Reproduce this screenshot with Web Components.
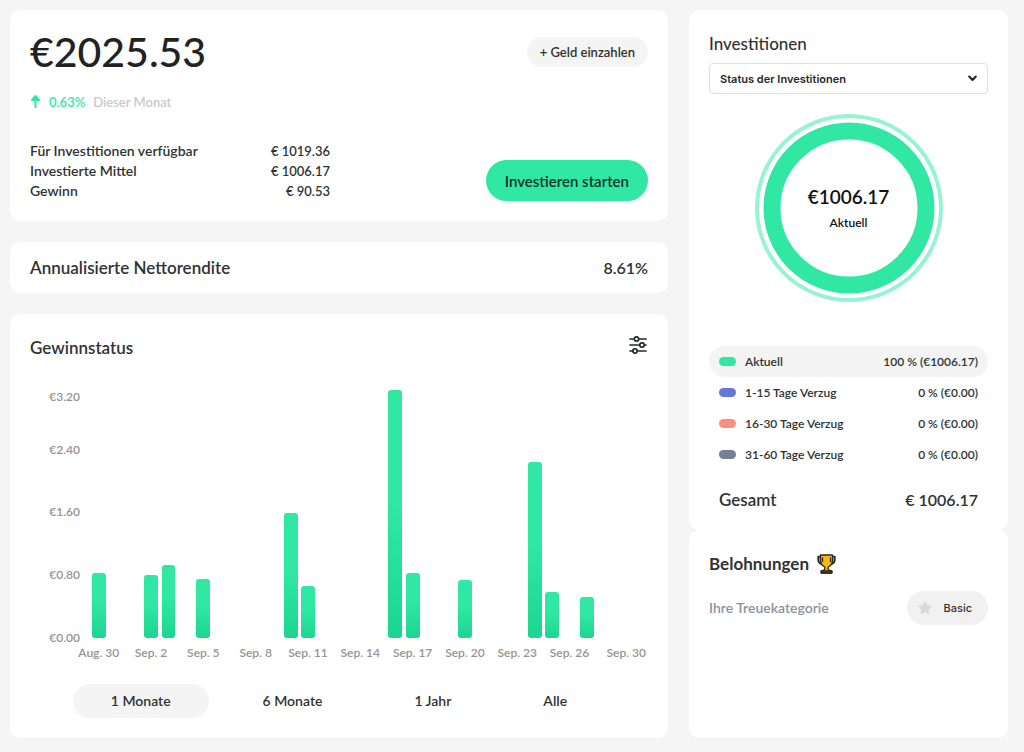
<!DOCTYPE html>
<html lang="de">
<head>
<meta charset="utf-8">
<meta name="viewport" content="width=device-width, initial-scale=1">
<title>Portfolio</title>
<style>
  body {
    margin: 0;
    background: #f5f5f5;
    color: #303332;
    font: 600 14px/20px Lato, "Liberation Sans", sans-serif;
    --green: #30e8a4;
    --soft: #f4f4f4;
  }
</style>
</head>
<body>
<portfolio-dashboard></portfolio-dashboard>

<script>
const define = (name, html, setup) => {
  const template = document.createElement('template');
  template.innerHTML = '<style>*{box-sizing:border-box}:host([hidden]){display:none}</style>' + html;
  customElements.define(name, class extends HTMLElement {
    connectedCallback() {
      if (this.shadowRoot) return;
      const root = this.attachShadow({ mode: 'open' });
      root.append(template.content.cloneNode(true));
      if (setup) setup(this, root);
    }
  });
};

define('ui-card', `
  <style>
    :host { display: block; box-sizing: border-box; background: #fff; border-radius: 10px; padding: 20px; min-width: 0; }
  </style>
  <slot></slot>`);

define('pill-button', `
  <style>
    :host { display: inline-block; }
    button { display: block; border: 0; border-radius: 24px; height: 30px; padding: 0 13px; background: var(--soft);
      color: inherit; font: inherit; font-size: 13px; white-space: nowrap; cursor: pointer; }
    :host([kind="primary"]) button { height: 41px; padding: 0 19px; background: var(--green); color: #14342a; font-size: 15px; }
    :host([kind="tab"]) button { height: 34px; padding: 0 38px; background: transparent; font-size: 14px; }
    :host([kind="tab"][active]) button { background: var(--soft); }
  </style>
  <button type="button"><slot></slot></button>`);

define('account-summary', `
  <style>
    :host { display: block; }
    .row { display: flex; justify-content: space-between; align-items: center; }
    .bottom { align-items: flex-end; margin-top: 29px; }
    h1 { margin: 0; font-size: 41px; line-height: 44px; font-weight: 500; color: #222; }
    .trend { display: flex; align-items: center; margin: 18px 0 0; font-size: 13px; line-height: 20px; color: #c9caca; }
    .trend svg { margin-right: 8px; }
    .trend strong { color: var(--green); font-weight: 600; margin-right: 8px; }
    table { width: 300px; border-collapse: collapse; }
    th, td { padding: 0; font-weight: 600; text-align: left; }
    td { text-align: right; font-size: 13px; }
  </style>
  <div class="row">
    <h1>€2025.53</h1>
    <pill-button>+ Geld einzahlen</pill-button>
  </div>
  <p class="trend">
    <svg width="11" height="16" viewBox="0 0 11 16" aria-hidden="true"><path d="M5.500 14V3M2 6l3.500-4L9 6z" fill="#30e8a4" stroke="#30e8a4" stroke-width="2" stroke-linejoin="round"/></svg>
    <strong>0.63%</strong><span>Dieser Monat</span>
  </p>
  <div class="row bottom">
    <table>
      <tr><th scope="row">Für Investitionen verfügbar</th><td>€ 1019.36</td></tr>
      <tr><th scope="row">Investierte Mittel</th><td>€ 1006.17</td></tr>
      <tr><th scope="row">Gewinn</th><td>€ 90.53</td></tr>
    </table>
    <pill-button kind="primary">Investieren starten</pill-button>
  </div>`);

define('net-return', `
  <style>
    :host { display: flex; justify-content: space-between; align-items: center; height: 51px; font-size: 17px; }
    h2 { margin: 0; font: inherit; }
    span { font-size: 16px; }
  </style>
  <h2>Annualisierte Nettorendite</h2><span>8.61%</span>`);

define('profit-chart', `
  <style>
    :host { display: grid; grid-template: 250px 23px / 50px minmax(0, 1fr); column-gap: 10px; font-size: 12px; line-height: 16px; color: #929594; }
    .axis { grid-row: 1 / 3; display: grid; grid-template-rows: 17px 53px 62px 63px 63px; align-content: start; align-items: end; justify-items: end; }
    .plot, .days { grid-column: 2; display: grid; grid-template-columns: repeat(32, minmax(0, 1fr)); }
    .plot { grid-row: 1; align-items: end; justify-items: center; }
    .days { grid-row: 2; align-items: end; }
    .bar { grid-row: 1; width: 80%; border-radius: 3px; background: linear-gradient(#30e8a4 45%, #1bd590); }
    .day { grid-row: 1; display: flex; justify-content: center; white-space: nowrap; }
    .day:last-child { justify-content: flex-end; padding-right: 2px; }
  </style>
  <div class="axis"><span>€3.20</span><span>€2.40</span><span>€1.60</span><span>€0.80</span><span>€0.00</span></div>
  <div class="plot"></div>
  <div class="days"></div>`, (host, root) => {
  const profits = { 0: .83, 3: .81, 4: .93, 6: .76, 11: 1.6, 12: .66, 17: 3.17, 18: .83, 21: .74, 25: 2.25, 26: .59, 28: .52 };
  const labels = { 0: 'Aug. 30', 3: 'Sep. 2', 6: 'Sep. 5', 9: 'Sep. 8', 12: 'Sep. 11', 15: 'Sep. 14', 18: 'Sep. 17', 21: 'Sep. 20', 24: 'Sep. 23', 27: 'Sep. 26', 31: 'Sep. 30' };
  const add = (parent, cls, day) => {
    const el = document.createElement('span');
    el.className = cls;
    el.style.gridColumn = Number(day) + 1;
    root.querySelector(parent).append(el);
    return el;
  };
  for (const [day, value] of Object.entries(profits)) add('.plot', 'bar', day).style.height = value / 3.2 * 100 + '%';
  for (const [day, text] of Object.entries(labels)) add('.days', 'day', day).textContent = text;
});

define('profit-status', `
  <style>
    :host { display: block; }
    header { display: flex; justify-content: space-between; align-items: flex-start; height: 28px; margin-bottom: 26px; }
    h2 { margin: 0; font-size: 17px; line-height: 28px; font-weight: 600; }
    header button { display: block; padding: 0; border: 0; background: none; height: 24px; cursor: pointer; }
    nav { display: flex; justify-content: center; gap: 16px; margin-top: 23px; }
  </style>
  <header>
    <h2>Gewinnstatus</h2>
    <button type="button" aria-label="Filter">
      <svg width="20" height="18" viewBox="0 0 20 18" fill="none" stroke="#222b2d" stroke-width="1.700" stroke-linecap="round">
        <path d="M2 3h4M11 3h7M2 9h9M17 9h1M2 15h3M10 15h8"/>
        <circle cx="8.500" cy="3" r="2.200"/><circle cx="14" cy="9" r="2.200"/><circle cx="7" cy="15" r="2.200"/>
      </svg>
    </button>
  </header>
  <profit-chart></profit-chart>
  <nav>
    <pill-button kind="tab" active>1 Monate</pill-button>
    <pill-button kind="tab">6 Monate</pill-button>
    <pill-button kind="tab">1 Jahr</pill-button>
    <pill-button kind="tab">Alle</pill-button>
  </nav>`);

define('status-donut', `
  <style>
    :host { display: grid; justify-items: center; align-items: center; color: #111; }
    svg, .label { grid-area: 1 / 1; }
    .label { display: grid; justify-items: center; gap: 2px; font-size: 12px; line-height: 20px; }
    strong { font-size: 19px; line-height: 28px; font-weight: 600; }
  </style>
  <svg width="188" height="188" viewBox="0 0 188 188" fill="none" aria-hidden="true">
    <circle cx="94" cy="94" r="92" stroke="#97f3d1" stroke-width="4"/>
    <circle cx="94" cy="94" r="77" stroke="#30e8a4" stroke-width="17"/>
  </svg>
  <div class="label"><strong>€1006.17</strong><span>Aktuell</span></div>`);

define('legend-row', `
  <style>
    :host { display: flex; align-items: center; height: 31px; padding: 0 10px; border-radius: 16px; font-size: 12px; }
    :host([active]) { background: var(--soft); }
    i { width: 17px; height: 9px; border-radius: 5px; margin-right: 9px; background: var(--swatch); }
    .amount { margin-left: auto; }
  </style>
  <i></i><slot></slot><span class="amount"><slot name="amount"></slot></span>`);

define('investment-status', `
  <style>
    :host { display: block; }
    h2 { margin: 4px 0 9px; font-size: 17px; line-height: 20px; font-weight: 500; }
    .field { display: grid; align-items: center; }
    select, .field svg { grid-area: 1 / 1; }
    select { appearance: none; width: 100%; height: 31px; padding: 0 10px; border: 1px solid #dedfdf; border-radius: 4px;
      background: #fff; color: #252727; font: 600 11px/16px Inter, sans-serif; }
    .field svg { justify-self: end; margin-right: 11px; pointer-events: none; }
    status-donut { margin: 20px 0 44px; }
    .total { display: flex; justify-content: space-between; padding: 0 10px; margin-top: 20px; font-size: 17px; line-height: 20px; }
    .total b { font-weight: 600; font-size: 16px; }
  </style>
  <h2>Investitionen</h2>
  <div class="field">
    <select aria-label="Ansicht"><option>Status der Investitionen</option></select>
    <svg width="9" height="7" viewBox="0 0 9 7" fill="none" stroke="#222" stroke-width="2" stroke-linecap="round" stroke-linejoin="round" aria-hidden="true"><path d="M1.200 1.500 4.500 5l3.300-3.500"/></svg>
  </div>
  <status-donut></status-donut>
  <legend-row active style="--swatch:#30e8a4">Aktuell<span slot="amount">100 % (€1006.17)</span></legend-row>
  <legend-row style="--swatch:#6478d8">1-15 Tage Verzug<span slot="amount">0 % (€0.00)</span></legend-row>
  <legend-row style="--swatch:#f7907e">16-30 Tage Verzug<span slot="amount">0 % (€0.00)</span></legend-row>
  <legend-row style="--swatch:#747f99">31-60 Tage Verzug<span slot="amount">0 % (€0.00)</span></legend-row>
  <div class="total"><span>Gesamt</span><b>€ 1006.17</b></div>`);

define('rewards-panel', `
  <style>
    :host { display: block; }
    h2 { display: flex; align-items: center; gap: 8px; margin: 4px 0 17px; font-size: 17px; line-height: 20px; font-weight: 700; }
    .row { display: flex; justify-content: space-between; align-items: center; color: #8b929c; }
    .badge { display: flex; align-items: center; gap: 10px; height: 34px; padding: 0 16px 0 10px; border-radius: 17px; background: #f1f1f1; color: #333; font: 500 11px/16px Inter, sans-serif; }
  </style>
  <h2>Belohnungen
    <svg width="19" height="20" viewBox="0 0 19 20" aria-hidden="true" stroke="#2a2721" stroke-width="1.300" stroke-linejoin="round">
      <path d="M4 2.500H1.200V6c0 2.600 2 4 5 4.500M15 2.500h2.800V6c0 2.600-2 4-5 4.500" fill="#f5b010" stroke-width="1.700"/>
      <path d="M3.500 1h12v5c0 4-2 6-4.300 7v2.500l3.300 1.500v2h-10v-2l3.300-1.500V13C5.500 12 3.500 10 3.500 6z" fill="#fcb60c"/>
      <path d="M4 17h11v2H4z" fill="#93491b"/>
      <path d="M5.500 4v3.500M13.500 4v3.500" stroke-linecap="round" fill="none"/>
    </svg>
  </h2>
  <div class="row"><span>Ihre Treuekategorie</span>
    <span class="badge">
      <svg width="16" height="16" viewBox="0 0 16 16" aria-hidden="true"><path d="m8 1.500 1.900 4.200 4.600.5-3.400 3.100.9 4.600L8 11.600l-4 2.300.9-4.600L1.500 6.200l4.600-.5z" fill="#d9d9d9" stroke="#d9d9d9" stroke-linejoin="round"/></svg>
      Basic
    </span>
  </div>`);

define('portfolio-dashboard', `
  <style>
    :host { display: grid; grid-template-columns: minmax(0, 658fr) minmax(0, 319fr); gap: 21px; padding: 10px 16px 14px 10px; }
    main, aside { display: flex; flex-direction: column; }
    main { gap: 21px; }
    .flat { padding-block: 0; }
    .fill { flex: 1; }
  </style>
  <main>
    <ui-card><account-summary></account-summary></ui-card>
    <ui-card class="flat"><net-return></net-return></ui-card>
    <ui-card><profit-status></profit-status></ui-card>
  </main>
  <aside>
    <ui-card><investment-status></investment-status></ui-card>
    <ui-card class="fill"><rewards-panel></rewards-panel></ui-card>
  </aside>`);
</script>
</body>
</html>
